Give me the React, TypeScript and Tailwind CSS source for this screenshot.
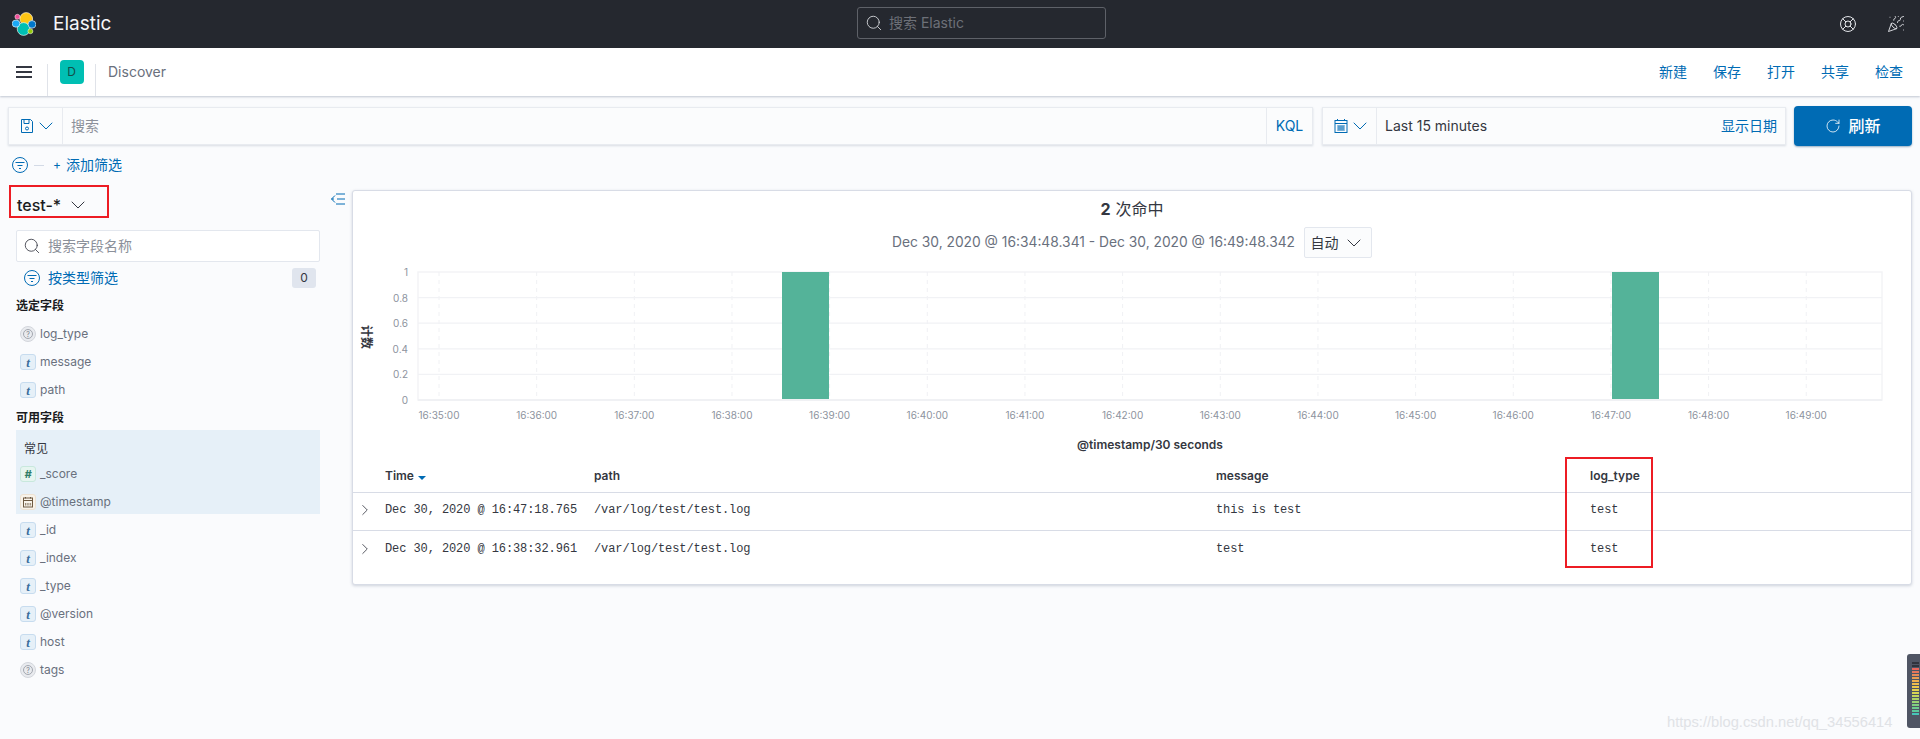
import { ChevronDown, ChevronRight, LifeBuoy, PartyPopper, RotateCw, Search } from "lucide-react";

const SANS = "[font-family:Inter,'Noto_Sans_CJK_SC',sans-serif]";

const selectedFields = [
  { type: "unknown", name: "log_type" },
  { type: "string", name: "message" },
  { type: "string", name: "path" },
];

const popularFields = [
  { type: "number", name: "_score" },
  { type: "date", name: "@timestamp" },
];

const otherFields = [
  { type: "string", name: "_id" },
  { type: "string", name: "_index" },
  { type: "string", name: "_type" },
  { type: "string", name: "@version" },
  { type: "string", name: "host" },
  { type: "unknown", name: "tags" },
];

const rows = [
  { time: "Dec 30, 2020 @ 16:47:18.765", path: "/var/log/test/test.log", message: "this is test", logType: "test" },
  { time: "Dec 30, 2020 @ 16:38:32.961", path: "/var/log/test/test.log", message: "test", logType: "test" },
];

const minutes = ["35", "36", "37", "38", "39", "40", "41", "42", "43", "44", "45", "46", "47", "48", "49"];
const meterColors = [
  "#2f333d", "#2f333d", "#e8665c", "#e8765c", "#e98a58", "#eb9e52", "#efb04e", "#f0bd4c", "#eec94c",
  "#e6d24e", "#d8d654", "#c4d65c", "#aed466", "#98d272", "#80cf80", "#6ccb8e", "#5cc89c", "#46c4b8",
];

function EuiFilterIcon({ className }: { className?: string }) {
  return (
    <svg viewBox="0 0 16 16" className={className} fill="none" stroke="currentColor" strokeWidth="1">
      <circle cx="8" cy="8" r="7.5" />
      <path d="M3.5 5.5h9M5.5 8.5h5M7 11.5h2" />
    </svg>
  );
}

function Logo() {
  return (
    <svg viewBox="0 0 24 24" className="h-6 w-6">
      <circle cx="14.2" cy="7" r="6.4" fill="#fec514" stroke="#fff" strokeWidth="0.6" />
      <circle cx="11.6" cy="17" r="6.4" fill="#00bfb3" stroke="#fff" strokeWidth="0.6" />
      <ellipse cx="4" cy="11.6" rx="3.9" ry="3.6" fill="#1ba9f5" stroke="#fff" strokeWidth="0.6" />
      <ellipse cx="20" cy="12.4" rx="3.9" ry="3.8" fill="#0077cc" stroke="#fff" strokeWidth="0.6" />
      <circle cx="5.4" cy="4.8" r="2.5" fill="#f04e98" stroke="#fff" strokeWidth="0.5" />
      <circle cx="18.4" cy="19.2" r="2.5" fill="#93c90e" stroke="#fff" strokeWidth="0.5" />
    </svg>
  );
}

function FieldToken({ type }: { type: string }) {
  if (type === "unknown") {
    return (
      <span className="flex h-4 w-4 items-center justify-center rounded-full border border-[#d3d6dc] bg-[#e9ebef]">
        <span className="flex h-[10px] w-[10px] items-center justify-center rounded-full border border-[#a3a7af] text-[7px] leading-none text-[#7d828c]">?</span>
      </span>
    );
  }
  if (type === "number") {
    return (
      <span className="flex h-4 w-4 items-center justify-center rounded-[3px] border border-[#c8e8dd] bg-[#e6f5f0] text-[11px] font-bold italic leading-none text-[#2f7d68]">#</span>
    );
  }
  if (type === "date") {
    return (
      <span className="flex h-4 w-4 items-center justify-center rounded-[3px] border border-[#eee2d2] bg-[#f8f3ea] text-[#6e5a42]">
        <svg viewBox="0 0 12 12" className="h-3 w-3" fill="none" stroke="currentColor" strokeWidth="1">
          <rect x="1.5" y="2" width="9" height="9" />
          <path d="M1.5 4.5h9M3.5 1v1.5M8.5 1v1.5" />
          <path d="M3.5 7v2.5M5.2 7v2.5M6.9 7v2.5M8.6 7v2.5" strokeWidth="0.7" />
        </svg>
      </span>
    );
  }
  return (
    <span className="flex h-4 w-4 items-center justify-center rounded-[3px] border border-[#c7dcef] bg-[#e6f0f8] [font-family:'Liberation_Serif',serif] text-[13px] font-bold italic leading-none text-[#3a6d9c]">t</span>
  );
}

function FieldRow({ type, name }: { type: string; name: string }) {
  return (
    <div className="flex h-7 items-center gap-1 pl-1 text-xs text-[#69707d]">
      <FieldToken type={type} />
      <span>{name}</span>
    </div>
  );
}

function HitsChart() {
  const left = 65;
  const top = 14;
  const plotW = 1464;
  const plotH = 128;
  const tickX = (i: number) => 86 + i * 97.66;
  return (
    <svg width="1558" height="202" className="block">
      <rect x={left} y={top} width={plotW} height={plotH} fill="#fff" stroke="#f3f4f6" strokeWidth="1.5" />
      {minutes.map((m, i) => (
        <line key={m} x1={tickX(i)} x2={tickX(i)} y1={top} y2={top + plotH} stroke="#f0f1f4" strokeDasharray="4 4" />
      ))}
      {[0.2, 0.4, 0.6, 0.8].map((v) => (
        <line key={v} x1={left} x2={left + plotW} y1={top + plotH * v} y2={top + plotH * v} stroke="#f1f2f5" strokeWidth="1.2" />
      ))}
      <rect x="429" y={top} width="47" height={plotH} fill="#54b399" />
      <rect x="1259" y={top} width="47" height={plotH} fill="#54b399" />
      <line x1={left} x2={left + plotW} y1={top + plotH} y2={top + plotH} stroke="#f0f1f4" strokeWidth="2" />
      {["1", "0.8", "0.6", "0.4", "0.2", "0"].map((label, i) => (
        <text key={label} x="55" y={top + 4 + i * 25.6} textAnchor="end" fontSize="10" fill="#8d939e" fontFamily="Inter, sans-serif">
          {label}
        </text>
      ))}
      {minutes.map((m, i) => (
        <text key={m} x={tickX(i)} y="161" textAnchor="middle" fontSize="10" fill="#8d939e" fontFamily="Inter, sans-serif">
          {`16:${m}:00`}
        </text>
      ))}
      <text x="797" y="191" textAnchor="middle" fontSize="12" fontWeight="600" fill="#343741" fontFamily="Inter, sans-serif">
        @timestamp/30 seconds
      </text>
      <text
        transform="translate(9 79) rotate(90)"
        textAnchor="middle"
        fontSize="12"
        fontWeight="700"
        fill="#343741"
        fontFamily="'Noto Sans CJK SC', sans-serif"
      >
        计数
      </text>
    </svg>
  );
}

export default function App() {
  return (
    <div className={`relative h-[739px] overflow-hidden bg-[#fafbfd] ${SANS}`}>
      {/* global header */}
      <header className="relative flex h-12 items-center bg-[#25282f] pl-3 pr-[15px]">
        <Logo />
        <span className="ml-[17px] text-[19px] text-[#f5f7fa]">Elastic</span>
        <div className="absolute left-[857px] top-[7px] flex h-[32px] w-[249px] items-center gap-[6px] rounded-[3px] border border-[#5e6168] bg-[#25282f] pl-[7px]">
          <Search className="h-[18px] w-[18px] text-[#d4d6da]" strokeWidth={1.2} />
          <span className="text-sm text-[#6d7078]">搜索 Elastic</span>
        </div>
        <div className="ml-auto flex items-center gap-[30px] text-[#e6e8ec]">
          <LifeBuoy className="h-[18px] w-[18px]" strokeWidth={1.3} />
          <PartyPopper className="h-[18px] w-[18px]" strokeWidth={1.2} />
        </div>
      </header>

      {/* app bar */}
      <div className="flex h-12 items-center bg-white pr-[17px] shadow-[0_1px_2px_rgba(152,162,179,0.6)]">
        <div className="flex h-8 w-[48px] items-center self-end border-r border-[#e0e3e9] pb-[16px] pl-4">
          <div className="flex w-4 flex-col gap-[3px]">
            <span className="h-[2px] bg-[#343741]" />
            <span className="h-[2px] bg-[#343741]" />
            <span className="h-[2px] bg-[#343741]" />
          </div>
        </div>
        <div className="flex h-8 w-[48px] justify-center self-end border-r border-[#e0e3e9]">
          <span className="-mt-[4px] flex h-6 w-6 items-center justify-center rounded bg-[#00bfb3] text-xs text-[#134e4a]">D</span>
        </div>
        <span className="ml-3 text-sm text-[#69707d]">Discover</span>
        <nav className="ml-auto flex gap-[26px] text-sm text-[#006bb4]">
          <span>新建</span>
          <span>保存</span>
          <span>打开</span>
          <span>共享</span>
          <span>检查</span>
        </nav>
      </div>

      {/* query bar */}
      <div className="flex items-center pl-2 pr-2 pt-[10px]">
        <div className="flex h-[38px] w-[1305px] items-stretch border border-[#e8ebf0] bg-[#fbfcfd] shadow-[0_1px_2px_rgba(152,162,179,0.35)]">
          <div className="flex w-[54px] items-center border-r border-[#e8ebf0] pl-[10px] text-[#006bb4]">
            <svg viewBox="0 0 16 16" className="h-4 w-4 shrink-0" fill="none" stroke="currentColor" strokeWidth="1">
              <path d="M2.5 1.5h9l2 2v11h-11z" />
              <path d="M5 1.5v4h5v-4" />
              <circle cx="8" cy="10.5" r="1.5" />
            </svg>
            <ChevronDown className="-ml-px h-6 w-6 shrink-0" strokeWidth={1} />
          </div>
          <span className="flex flex-1 items-center pl-2 text-sm text-[#8b909a]">搜索</span>
          <span className="flex w-[46px] items-center justify-center border-l border-[#e8ebf0] text-sm text-[#006bb4]">KQL</span>
        </div>
        <div className="ml-[9px] flex h-[38px] w-[464px] items-stretch border border-[#e8ebf0] bg-[#fbfcfd] shadow-[0_1px_2px_rgba(152,162,179,0.35)]">
          <div className="flex w-[54px] items-center border-r border-[#e8ebf0] pl-[10px] text-[#006bb4]">
            <svg viewBox="0 0 16 16" className="h-4 w-4 shrink-0" fill="none" stroke="currentColor" strokeWidth="1">
              <rect x="2" y="2.5" width="12" height="12" />
              <path d="M2 5.5h12M4.5 1v2M11.5 1v2" />
              <path d="M4 8h8M4 10h8M4 12h8M6 7.5v5M8 7.5v5M10 7.5v5" strokeWidth="0.8" />
            </svg>
            <ChevronDown className="-ml-px h-6 w-6 shrink-0" strokeWidth={1} />
          </div>
          <span className="flex flex-1 items-center pl-2 text-sm text-[#343741]">Last 15 minutes</span>
          <span className="flex items-center pr-2 text-sm text-[#006bb4]">显示日期</span>
        </div>
        <button className="ml-2 flex h-10 w-[118px] items-center justify-center gap-[7px] rounded-[4px] bg-[#006bb4] text-base font-medium text-white shadow-[0_1px_2px_rgba(0,60,110,0.4)]">
          <RotateCw className="h-4 w-4" strokeWidth={1.2} />
          刷新
        </button>
      </div>

      {/* filter bar */}
      <div className="flex h-[35px] items-center pl-3 pt-[3px] text-[#006bb4]">
        <EuiFilterIcon className="h-4 w-4" />
        <span className="ml-[6px] h-px w-[10px] bg-[#d3dae6]" />
        <span className="ml-[9px] text-xs leading-none">+</span>
        <span className="ml-[5px] text-sm">添加筛选</span>
      </div>

      <div className="flex items-start pt-[9px]">
        {/* sidebar */}
        <aside className="relative w-[352px] shrink-0 pl-4">
          <div className="flex h-[30px] items-center pl-px text-base font-medium text-[#1a1c21]">
            test-*
            <ChevronDown className="ml-[5px] h-6 w-6 text-[#343741]" strokeWidth={1} />
          </div>
          <div className="mt-[10px] flex h-[32px] w-[304px] items-center gap-[7px] rounded-[2px] border border-[#e3e7ee] bg-white pl-[6px]">
            <Search className="h-[18px] w-[18px] text-[#343741]" strokeWidth={1.1} />
            <span className="text-sm text-[#8b909a]">搜索字段名称</span>
          </div>
          <div className="flex h-[32px] w-[300px] items-center pl-2 text-[#006bb4]">
            <EuiFilterIcon className="h-4 w-4" />
            <span className="ml-2 text-sm">按类型筛选</span>
            <span className="ml-auto flex h-5 w-6 items-center justify-center rounded-[3px] bg-[#e0e5ee] text-xs text-[#343741]">0</span>
          </div>
          <div className="flex h-6 items-center text-xs font-semibold text-[#1a1c21]">选定字段</div>
          <div className="mt-[2px]">
            {selectedFields.map((f) => (
              <FieldRow key={f.name} type={f.type} name={f.name} />
            ))}
          </div>
          <div className="flex h-[26px] items-center pt-[2px] text-xs font-semibold text-[#1a1c21]">可用字段</div>
          <div className="h-[84px] w-[304px] bg-[#e6f0f8]">
            <div className="flex h-[30px] items-center pl-2 pt-2 text-xs text-[#343741]">常见</div>
            {popularFields.map((f) => (
              <FieldRow key={f.name} type={f.type} name={f.name} />
            ))}
          </div>
          <div className="mt-[2px]">
            {otherFields.map((f) => (
              <FieldRow key={f.name} type={f.type} name={f.name} />
            ))}
          </div>
          <svg viewBox="0 0 16 16" className="absolute left-[330px] top-[1px] h-4 w-4 text-[#006bb4]" fill="none" stroke="currentColor" strokeWidth="1">
            <path d="M7 8h8M6 3h9M6 13h9M5 4.5 1.5 8 5 11.5M1.5 8H4" />
          </svg>
        </aside>

        {/* results */}
        <main className="h-[395px] w-[1560px] rounded-[3px] border border-[#d8dce6] bg-white shadow-[0_1px_3px_rgba(152,162,179,0.45)]">
          <div className="flex h-[36px] items-center justify-center gap-[5px] text-base text-[#343741]">
            <span className="font-bold">2</span>
            <span>次命中</span>
          </div>
          <div className="flex h-[31px] items-center justify-center gap-2 text-[13.8px] text-[#69707d]">
            <span>Dec 30, 2020 @ 16:34:48.341 - Dec 30, 2020 @ 16:49:48.342</span>
            <span className="ml-px flex h-[31px] w-[68px] items-center justify-center gap-[3px] rounded-[2px] border border-[#e3e7ee] bg-[#fbfcfd] text-sm text-[#343741]">
              自动
              <ChevronDown className="h-6 w-6" strokeWidth={1} />
            </span>
          </div>
          <HitsChart />
          <div className="grid h-[33px] grid-cols-[32px_209px_622px_374px_1fr] items-center border-b border-[#d8dce6] text-xs font-semibold text-[#343741]">
            <span />
            <span className="flex items-center gap-1">
              Time
              <span className="mt-[3px] h-0 w-0 border-x-[4px] border-t-[4px] border-x-transparent border-t-[#006bb4]" />
            </span>
            <span>path</span>
            <span>message</span>
            <span>log_type</span>
          </div>
          {rows.map((row, i) => (
            <div
              key={row.time}
              className={`grid h-[38px] grid-cols-[32px_209px_622px_374px_1fr] items-center pb-[3px] [font-family:'Liberation_Mono',monospace] text-xs tracking-[-0.09px] text-[#343741] ${i === 0 ? "border-b border-[#d8dce6]" : ""}`}
            >
              <ChevronRight className="ml-[3px] h-[18px] w-[18px] text-[#343741]" strokeWidth={1.1} />
              <span>{row.time}</span>
              <span>{row.path}</span>
              <span>{row.message}</span>
              <span>{row.logType}</span>
            </div>
          ))}
        </main>
      </div>

      {/* red annotations from the screenshot */}
      <div className="absolute left-[9px] top-[185px] h-[33px] w-[100px] border-2 border-[#ed1c24]" />
      <div className="absolute left-[1565px] top-[457px] h-[111px] w-[88px] border-2 border-[#ed1c24]" />

      {/* watermark */}
      <span className="absolute left-[1667px] top-[711px] whitespace-nowrap [font-family:'Liberation_Sans',sans-serif] text-[14.7px] text-[#e0e2e6]">
        https://blog.csdn.net/qq_34556414
      </span>

      {/* docked meter */}
      <div className="absolute right-0 top-[654px] flex h-[74px] w-[13px] flex-col items-center gap-px rounded-l-[3px] bg-[#4f5564] pl-[3px] pt-[8px]">
        {meterColors.map((c, i) => (
          <span key={i} className="h-[2px] w-[7px] shrink-0" style={{ backgroundColor: c }} />
        ))}
      </div>
    </div>
  );
}
